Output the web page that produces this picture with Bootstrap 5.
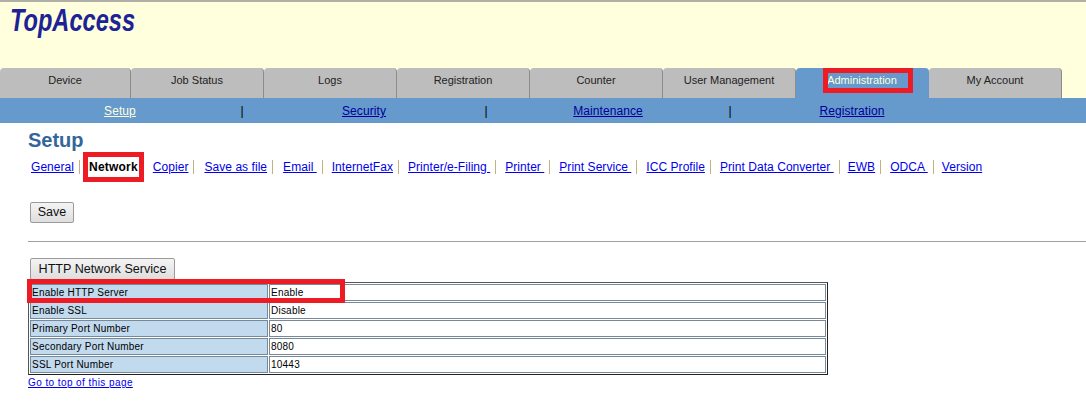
<!DOCTYPE html>
<html lang="en">
<head>
<meta charset="utf-8">
<title>TopAccess</title>
<link href="https://cdn.jsdelivr.net/npm/bootstrap@5.3.0/dist/css/bootstrap.min.css" rel="stylesheet">
<style>
body{background:#fff;font-family:"Liberation Sans",Arial,sans-serif;font-size:12px;color:#000;overflow:hidden;position:relative;height:402px}
a{color:#0000ee}
.hdr{height:68px;background:#ffffdd;border-top:2px solid #b0b0a8}
.logo{display:block}
.logo text{font-family:"Liberation Sans",Arial,sans-serif;font-weight:700;font-style:italic;font-size:31px;fill:#1c2396}
.tabs{background:#ffffdd;height:30px}
.tabx{width:133px;height:30px;background:#bdbdbd;border-right:1px solid #8c8c8c;border-radius:4px 4px 0 0;color:#222;font-size:11px;line-height:24px;text-align:center;text-decoration:none}
.tabx:first-child{width:131px}
.tabx.cur{background:#6699cc;color:#ffffd8;border-right-color:#6699cc}
.subbar{background:#6699cc;height:25px;line-height:26px;letter-spacing:.08px}
.subcell{width:240px;text-align:center}
.subcell a{color:#000099}
.subcell a.cur{color:#ffffdd}
.subsep{width:4px;text-align:center;color:#000}
.pgtitle{font-size:20px;font-weight:700;color:#336699;line-height:24px;margin:5px 0 0 28px}
.lnks{margin:5px 0 0 31px;height:20px;align-items:center;letter-spacing:.05px}
.lnk{padding-right:5px;margin-right:9px;border-right:1px solid #c2b280;line-height:14px;white-space:pre}
.lnk.bare{border-right:0;margin-right:10px}
.lnk.last{border:0}
.lnk.wide{margin-right:10px}
.lnk.tight{margin-right:8px}
.here{font-weight:700;color:#000;letter-spacing:.2px}
.gbtn{font-family:"Liberation Sans",Arial,sans-serif;background:linear-gradient(#f4f4f4,#dedede);border:1px solid #9a9a9a;border-radius:2px;color:#111;padding:0;line-height:1}
.gbtn:hover{background:#e4e4e4;color:#111;border-color:#9a9a9a}
.svbtn{width:44px;height:21px;font-size:12.5px;margin:25px 0 0 30px}
.rule{height:1px;background:#a0a0a0;margin:18px 0 0 28px}
.secbtn{width:145px;height:22px;font-size:12.6px;margin:16px 0 0 30px}
.dtab{width:800px;margin:2px 0 0 28px;border-collapse:separate;border-spacing:1px;border:1px solid;border-color:#555 #222 #222 #555;font-size:10px;letter-spacing:.22px}
.dtab td{height:17px;padding:0 0 0 1px;border:1px solid #778899;line-height:12px}
.dtab td.lbl{width:238px;background:#c2daee}
.toplnk{display:block;font-size:10px;letter-spacing:.42px;margin:1px 0 0 28px;line-height:13px}
.anno{position:absolute;border:5px solid #ed1c24;pointer-events:none}
.an1{left:823px;top:68px;width:90px;height:25px}
.an2{left:83px;top:152px;width:61px;height:30px}
.an3{left:27px;top:279px;width:318px;height:24px}
</style>
</head>
<body>
<div class="hdr"><svg class="logo" width="240" height="50" role="img" aria-label="TopAccess"><text x="10" y="29" textLength="125" lengthAdjust="spacingAndGlyphs">TopAccess</text></svg></div>
<div class="tabs d-flex">
<a class="tabx" href="#">Device</a>
<a class="tabx" href="#">Job Status</a>
<a class="tabx" href="#">Logs</a>
<a class="tabx" href="#">Registration</a>
<a class="tabx" href="#">Counter</a>
<a class="tabx" href="#">User Management</a>
<a class="tabx cur" href="#">Administration</a>
<a class="tabx" href="#">My Account</a>
</div>
<div class="subbar d-flex">
<div class="subcell"><a class="cur" href="#">Setup</a></div><div class="subsep">|</div>
<div class="subcell"><a href="#">Security</a></div><div class="subsep">|</div>
<div class="subcell"><a href="#">Maintenance</a></div><div class="subsep">|</div>
<div class="subcell"><a href="#">Registration</a></div>
</div>
<h1 class="pgtitle">Setup</h1>
<div class="lnks d-flex">
<span class="lnk"><a href="#">General</a></span>
<span class="lnk bare here">Network</span>
<span class="lnk wide"><a href="#">Copier</a></span>
<span class="lnk wide"><a href="#">Save as file</a></span>
<span class="lnk"><a href="#">Email </a></span>
<span class="lnk"><a href="#">InternetFax</a></span>
<span class="lnk"><a href="#">Printer/e-Filing </a></span>
<span class="lnk"><a href="#">Printer </a></span>
<span class="lnk"><a href="#">Print Service </a></span>
<span class="lnk"><a href="#">ICC Profile</a></span>
<span class="lnk tight"><a href="#">Print Data Converter </a></span>
<span class="lnk"><a href="#">EWB</a></span>
<span class="lnk tight"><a href="#">ODCA </a></span>
<span class="lnk last"><a href="#">Version</a></span>
</div>
<button type="button" class="btn gbtn svbtn d-block">Save</button>
<div class="rule"></div>
<button type="button" class="btn gbtn secbtn d-block">HTTP Network Service</button>
<table class="dtab">
<tr><td class="lbl">Enable HTTP Server</td><td>Enable</td></tr>
<tr><td class="lbl">Enable SSL</td><td>Disable</td></tr>
<tr><td class="lbl">Primary Port Number</td><td>80</td></tr>
<tr><td class="lbl">Secondary Port Number</td><td>8080</td></tr>
<tr><td class="lbl">SSL Port Number</td><td>10443</td></tr>
</table>
<a class="toplnk" href="#">Go to top of this page</a>
<div class="anno an1"></div>
<div class="anno an2"></div>
<div class="anno an3"></div>
</body>
</html>
